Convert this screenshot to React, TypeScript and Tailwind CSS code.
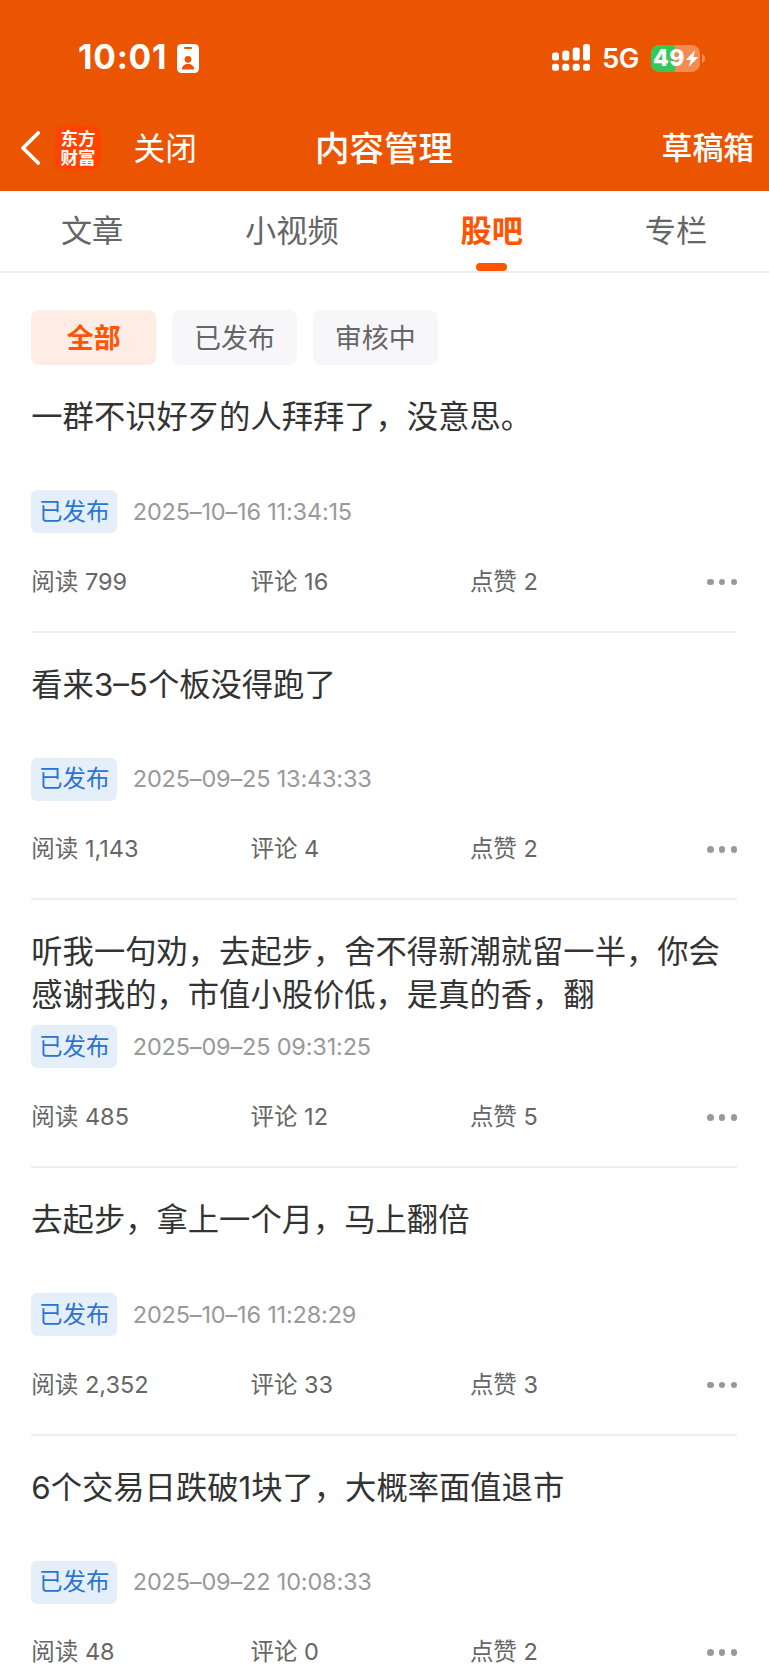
import { useState } from "react"

const posts = [
  { id: 1, title: "一群不识好歹的人拜拜了，没意思。", date: "2025–10–16 11:34:15", reads: "799", comments: "16", likes: "2" },
  { id: 2, title: "看来3–5个板没得跑了", date: "2025–09–25 13:43:33", reads: "1,143", comments: "4", likes: "2" },
  { id: 3, title: "听我一句劝，去起步，舍不得新潮就留一半，你会感谢我的，市值小股价低，是真的香，翻", date: "2025–09–25 09:31:25", reads: "485", comments: "12", likes: "5" },
  { id: 4, title: "去起步，拿上一个月，马上翻倍", date: "2025–10–16 11:28:29", reads: "2,352", comments: "33", likes: "3" },
  { id: 5, title: "6个交易日跌破1块了，大概率面值退市", date: "2025–09–22 10:08:33", reads: "48", comments: "0", likes: "2" },
]

const tabs = ["文章", "小视频", "股吧", "专栏"]
const filters = ["全部", "已发布", "审核中"]

function StatusBar() {
  return (
    <div className="flex h-[116px] items-center justify-between pl-[78px] pr-[64px] text-white">
      <div className="flex items-center gap-[10px]">
        <span className="w-[89px] text-[33.5px] font-bold leading-none tracking-[0.8px]">10:01</span>
        <svg width="22" height="29" viewBox="0 0 22 29">
          <rect width="22" height="29" rx="4.5" fill="#fff" />
          <rect x="7" y="3" width="8" height="2" rx="1" fill="#eb5502" />
          <circle cx="11" cy="15.3" r="3.4" fill="#eb5502" />
          <path d="M4.8 25.6c0-3.6 2.8-5.6 6.2-5.6s6.2 2 6.2 5.6z" fill="#eb5502" />
        </svg>
      </div>
      <div className="flex items-center">
        <svg className="-mt-px" width="38" height="27" viewBox="0 0 38 27" fill="#fff">
          <rect x="0" y="8.5" width="7" height="8" rx="2.5" />
          <rect x="10.3" y="6.5" width="7" height="10" rx="2.5" />
          <rect x="20.7" y="3.5" width="7" height="13" rx="2.5" />
          <rect x="31" y="0" width="7" height="16.5" rx="2.5" />
          <rect x="0" y="19.7" width="7" height="7" rx="2.5" />
          <rect x="10.3" y="19.7" width="7" height="7" rx="2.5" />
          <rect x="20.7" y="19.7" width="7" height="7" rx="2.5" />
          <rect x="31" y="19.7" width="7" height="7" rx="2.5" />
        </svg>
        <span className="ml-[12px] w-[37px] pt-px text-[27.5px] font-semibold leading-none tracking-[-0.5px]">5G</span>
        <div className="relative ml-[12px] flex h-[27px] w-[49px] items-center overflow-hidden rounded-[8.5px] bg-[#f38b53]">
          <div className="absolute inset-y-0 left-0 w-[24px] bg-[#34c759]" />
          <span className="relative ml-[2px] w-[32px] text-[23px] font-extrabold leading-none tracking-[0.4px]">49</span>
          <svg className="relative ml-px" width="12" height="17" viewBox="0 0 12 17" fill="#fff">
            <path d="M9.3 0 .4 9.3c-.3.4-.1.8.3.8h4L2.7 17 11.6 7.7c.3-.4.1-.8-.3-.8h-4z" />
          </svg>
        </div>
        <svg className="ml-[2px]" width="3" height="9" viewBox="0 0 3 9">
          <path d="M0 0c2 .8 3 2.5 3 4.5S2 8.2 0 9z" fill="#f38b53" />
        </svg>
      </div>
    </div>
  )
}

function NavBar() {
  return (
    <div className="grid h-[75px] grid-cols-[1fr_auto_1fr] items-center pb-[11px] text-white">
      <div className="flex items-center pl-[19.5px]">
        <svg width="21" height="34" viewBox="0 0 21 34" fill="none" stroke="#fff" strokeWidth="3.8" strokeLinecap="round" strokeLinejoin="round">
          <path d="M18.2 2 3 17l15.2 15" />
        </svg>
        <div className="ml-[14.5px] flex h-[46px] w-[46px] flex-col items-center justify-center rounded-[10px] bg-[#ff4400] text-[17.5px] font-bold leading-[19px]">
          <span>东方</span>
          <span>财富</span>
        </div>
        <span className="ml-[32.5px] pt-[2px] text-[31.7px] leading-none">关闭</span>
      </div>
      <h1 className="pr-[1px] pt-[2px] text-[34.5px] font-medium leading-none">内容管理</h1>
      <span className="pr-[15px] pt-px text-right text-[30.8px] font-medium leading-none">草稿箱</span>
    </div>
  )
}

function PostItem({ post }: { post: (typeof posts)[number] }) {
  return (
    <div className="flex h-[267.7px] shrink-0 flex-col border-b-2 border-[#eeeeee] pt-[31px]">
      <h2 className="h-[86px] text-[31.3px] leading-[43px] text-[#333333]">{post.title}</h2>
      <div className="mt-[8px] flex h-[43px] items-center gap-[15.5px]">
        <span className="flex h-[43px] w-[86px] items-center justify-center rounded-[6px] bg-[#e5effa] text-[23.5px] leading-none text-[#2b74d0]">已发布</span>
        <span className="text-[23.5px] leading-none tracking-[-0.18px] text-[#999999]">{post.date}</span>
      </div>
      <div className="mt-[33px] flex h-[31px] items-center text-[23.5px] leading-none text-[#666666]">
        <span className="w-[219.2px]">阅读 {post.reads}</span>
        <span className="w-[219.4px]">评论 {post.comments}</span>
        <span>点赞 {post.likes}</span>
        <div className="ml-auto flex gap-[5.5px] pt-px">
          <i className="size-[6.4px] rounded-full bg-[#999999]" />
          <i className="size-[6.4px] rounded-full bg-[#999999]" />
          <i className="size-[6.4px] rounded-full bg-[#999999]" />
        </div>
      </div>
    </div>
  )
}

export default function App() {
  const [tab, setTab] = useState("股吧")
  const [filter, setFilter] = useState("全部")

  return (
    <main lang="zh-CN" className="flex h-[1665px] w-[769px] flex-col overflow-hidden bg-white font-['Inter','Noto_Sans_CJK_SC',sans-serif]">
      <header className="shrink-0 bg-[#eb5502]">
        <StatusBar />
        <NavBar />
      </header>

      {/* Tabs */}
      <nav className="flex h-[82px] shrink-0 justify-around border-b-2 border-[#eeeeee] pr-px">
        {tabs.map((t) => (
          <button
            key={t}
            onClick={() => setTab(t)}
            className={`flex flex-col items-center justify-between pt-[19px] text-[31.2px] leading-[42px] ${
              tab === t ? "font-bold text-[#ff5500]" : "text-[#666666]"
            }`}
          >
            {t}
            {tab === t && <span className="h-[8px] w-[31px] rounded-full bg-[#ff5500]" />}
          </button>
        ))}
      </nav>

      <div className="flex flex-col pl-[31.3px] pr-[31.7px] pt-[37.2px]">
        {/* Filters */}
        <div className="flex h-[54.75px] shrink-0 gap-[15.7px]">
          {filters.map((f) => (
            <button
              key={f}
              onClick={() => setFilter(f)}
              className={`w-[125px] rounded-[8px] pt-[2px] text-[27px] leading-none ${
                filter === f ? "bg-[#ffece5] font-bold text-[#ff5500]" : "bg-[#f7f7fa] text-[#666666]"
              }`}
            >
              {f}
            </button>
          ))}
        </div>

        {posts.map((post) => (
          <PostItem key={post.id} post={post} />
        ))}
      </div>
    </main>
  )
}
